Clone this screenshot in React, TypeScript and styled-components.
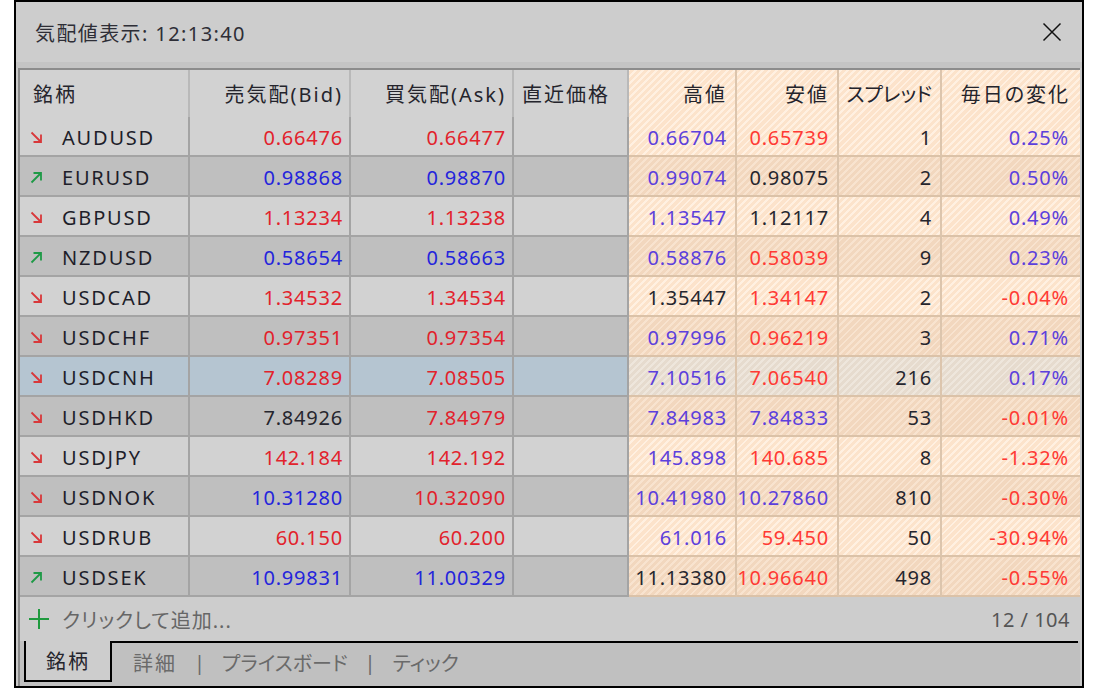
import React from 'react';
import styled, { createGlobalStyle } from 'styled-components';

const GlobalStyle = createGlobalStyle`
  html, body { margin: 0; padding: 0; background: #fff; }
  body {
    font-family: "Noto Sans", "Noto Sans CJK JP", sans-serif;
    font-size: 20px;
    color: #222;
  }
  * { box-sizing: border-box; }
`;

type Tone = 'light' | 'dark' | 'sel' | 'head';
type Ink = 'r' | 'b' | 'v' | 'o' | 'k';

const COLS = '170px 161px 163px 115px 108px 102px 103px 138px';

const grayBg: Record<Tone, string> = {
  light: '#d2d2d2',
  head: '#d2d2d2',
  dark: '#bfbfbf',
  sel: '#b5c5d1',
};

const hatchBg: Record<Tone, [string, string]> = {
  light: ['#fce3cb', '#fff0e1'],
  head: ['#fce3cb', '#fff0e1'],
  dark: ['#f2d7be', '#f8e3cf'],
  sel: ['#e6dbce', '#eee6dc'],
};

const inkColor: Record<Ink, string> = {
  r: '#e2222c',
  b: '#2424dc',
  v: '#5c40dc',
  o: '#ff3a34',
  k: '#26262e',
};

const Window = styled.div`
  margin-left: 14px;
  width: 1070px;
  height: 688px;
  border: 2px solid #000;
  background: #c9c9c9;
  display: flex;
  flex-direction: column;
`;

const TitleBar = styled.div`
  flex: none;
  height: 66px;
  display: flex;
  align-items: center;
  justify-content: space-between;
  padding: 0 20px 0 19px;
  background: #cdcdcd;
  border-bottom: 6px solid #c4c4c4;
`;

const Title = styled.span`
  color: #2e2e36;
  letter-spacing: 1.4px;
`;

const CloseBtn = styled.button`
  border: none;
  background: transparent;
  padding: 0;
  width: 20px;
  height: 20px;
  display: flex;
`;

const Panel = styled.div`
  flex: 1;
  margin: 0 2px;
  border-left: 2px solid #8c8c8c;
  border-top: 2px solid #8c8c8c;
  display: flex;
  flex-direction: column;
  background: #cdcdcd;
`;

const GridRow = styled.div<{ $head?: boolean }>`
  display: grid;
  grid-template-columns: ${COLS};
  height: ${(p) => (p.$head ? 47 : 40)}px;
`;

const Cell = styled.div<{
  $tone: Tone;
  $hatch?: boolean;
  $left?: boolean;
  $pl?: number;
  $pr?: number;
  $last?: boolean;
  $ink?: Ink;
}>`
  display: flex;
  align-items: center;
  justify-content: ${(p) => (p.$left ? 'flex-start' : 'flex-end')};
  gap: 19px;
  padding: ${(p) => (p.$tone === 'head' ? '0' : '3px')} ${(p) => p.$pr ?? 6}px 0 ${(p) => p.$pl ?? 0}px;
  white-space: nowrap;
  overflow: hidden;
  letter-spacing: 0.8px;
  color: ${(p) => (p.$ink ? inkColor[p.$ink] : '#1e1e2a')};
  background: ${(p) =>
    p.$hatch
      ? `repeating-linear-gradient(135deg, ${hatchBg[p.$tone][0]} 0 3px, ${hatchBg[p.$tone][1]} 3px 5px)`
      : grayBg[p.$tone]};
  background-attachment: fixed;
  border-right: ${(p) =>
    p.$last
      ? 'none'
      : `2px solid ${p.$hatch ? '#dcc5ad' : p.$tone === 'head' ? '#b9b9b9' : '#a4a4a4'}`};
  border-bottom: ${(p) =>
    p.$tone === 'head' ? 'none' : `2px solid ${p.$hatch ? '#dbc2a8' : '#a4a4a4'}`};
`;

const Symbol = styled.span`
  letter-spacing: 1.8px;
`;

const HeadText = styled.span<{ $ls?: number }>`
  letter-spacing: ${(p) => p.$ls ?? 2}px;
  font-feature-settings: "palt";
  color: #24242c;
`;

const AddRow = styled.div`
  flex: none;
  height: 44px;
  display: flex;
  align-items: center;
  justify-content: space-between;
  padding: 0 10px 0 8px;
  background: #cdcdcd;
  color: #666;
`;

const AddLabel = styled.span`
  display: flex;
  align-items: center;
  gap: 12px;
  letter-spacing: 1px;
  font-feature-settings: "palt";
`;

const Count = styled.span`
  color: #555;
  letter-spacing: 0.5px;
`;

const TabBar = styled.div`
  flex: 1;
  display: flex;
  align-items: flex-start;
  background: #c0c0c0;
  padding-left: 4px;
`;

const ActiveTab = styled.div`
  width: 88px;
  height: 41px;
  border: 2px solid #000;
  border-top: none;
  background: #cdcdcd;
  display: flex;
  align-items: center;
  justify-content: center;
  letter-spacing: 2px;
  color: #24242c;
`;

const TabRest = styled.div`
  flex: 1;
  height: 41px;
  margin-right: 2px;
  border-top: 2px solid #000;
  display: flex;
  align-items: center;
  gap: 17px;
  padding-left: 21px;
  color: #6a6a6a;
  font-feature-settings: "palt";
`;

const TabLabel = styled.span<{ $ls?: number }>`
  letter-spacing: ${(p) => p.$ls ?? 0}px;
`;

const Arrow = ({ up }: { up: boolean }) => (
  <svg width="13" height="13" viewBox="0 0 13 13" fill="none">
    {up ? (
      <path d="M1.5 11.5 L11 2 M3.5 2 H11 V9.5" stroke="#1e9a46" strokeWidth="1.8" />
    ) : (
      <path d="M1.5 1.5 L11 11 M3.5 11 H11 V3.5" stroke="#d8383a" strokeWidth="1.8" />
    )}
  </svg>
);

type Val = [string, Ink];
interface Quote {
  sym: string;
  up: boolean;
  bid: Val;
  ask: Val;
  high: Val;
  low: Val;
  spread: string;
  chg: Val;
}

const rows: Quote[] = [
  { sym: 'AUDUSD', up: false, bid: ['0.66476', 'r'], ask: ['0.66477', 'r'], high: ['0.66704', 'v'], low: ['0.65739', 'o'], spread: '1', chg: ['0.25%', 'v'] },
  { sym: 'EURUSD', up: true, bid: ['0.98868', 'b'], ask: ['0.98870', 'b'], high: ['0.99074', 'v'], low: ['0.98075', 'k'], spread: '2', chg: ['0.50%', 'v'] },
  { sym: 'GBPUSD', up: false, bid: ['1.13234', 'r'], ask: ['1.13238', 'r'], high: ['1.13547', 'v'], low: ['1.12117', 'k'], spread: '4', chg: ['0.49%', 'v'] },
  { sym: 'NZDUSD', up: true, bid: ['0.58654', 'b'], ask: ['0.58663', 'b'], high: ['0.58876', 'v'], low: ['0.58039', 'o'], spread: '9', chg: ['0.23%', 'v'] },
  { sym: 'USDCAD', up: false, bid: ['1.34532', 'r'], ask: ['1.34534', 'r'], high: ['1.35447', 'k'], low: ['1.34147', 'o'], spread: '2', chg: ['-0.04%', 'o'] },
  { sym: 'USDCHF', up: false, bid: ['0.97351', 'r'], ask: ['0.97354', 'r'], high: ['0.97996', 'v'], low: ['0.96219', 'o'], spread: '3', chg: ['0.71%', 'v'] },
  { sym: 'USDCNH', up: false, bid: ['7.08289', 'r'], ask: ['7.08505', 'r'], high: ['7.10516', 'v'], low: ['7.06540', 'o'], spread: '216', chg: ['0.17%', 'v'] },
  { sym: 'USDHKD', up: false, bid: ['7.84926', 'k'], ask: ['7.84979', 'r'], high: ['7.84983', 'v'], low: ['7.84833', 'v'], spread: '53', chg: ['-0.01%', 'o'] },
  { sym: 'USDJPY', up: false, bid: ['142.184', 'r'], ask: ['142.192', 'r'], high: ['145.898', 'v'], low: ['140.685', 'o'], spread: '8', chg: ['-1.32%', 'o'] },
  { sym: 'USDNOK', up: false, bid: ['10.31280', 'b'], ask: ['10.32090', 'r'], high: ['10.41980', 'v'], low: ['10.27860', 'v'], spread: '810', chg: ['-0.30%', 'o'] },
  { sym: 'USDRUB', up: false, bid: ['60.150', 'r'], ask: ['60.200', 'r'], high: ['61.016', 'v'], low: ['59.450', 'o'], spread: '50', chg: ['-30.94%', 'o'] },
  { sym: 'USDSEK', up: true, bid: ['10.99831', 'b'], ask: ['11.00329', 'b'], high: ['11.13380', 'k'], low: ['10.96640', 'o'], spread: '498', chg: ['-0.55%', 'o'] },
];

export default function App() {
  return (
    <>
      <GlobalStyle />
      <Window>
        <TitleBar>
          <Title>気配値表示: 12:13:40</Title>
          <CloseBtn aria-label="close">
            <svg width="20" height="20" viewBox="0 0 20 20">
              <path d="M1.5 1.5 L18.5 18.5 M18.5 1.5 L1.5 18.5" stroke="#111" strokeWidth="1.5" />
            </svg>
          </CloseBtn>
        </TitleBar>
        <Panel>
          <GridRow $head>
            <Cell $tone="head" $left $pl={13}><HeadText>銘柄</HeadText></Cell>
            <Cell $tone="head" $pr={6}><HeadText>売気配(Bid)</HeadText></Cell>
            <Cell $tone="head" $pr={6}><HeadText>買気配(Ask)</HeadText></Cell>
            <Cell $tone="head" $left $pl={8}><HeadText>直近価格</HeadText></Cell>
            <Cell $tone="head" $hatch $pr={8}><HeadText>高値</HeadText></Cell>
            <Cell $tone="head" $hatch $pr={8}><HeadText>安値</HeadText></Cell>
            <Cell $tone="head" $hatch $pr={8}><HeadText $ls={0}>スプレッド</HeadText></Cell>
            <Cell $tone="head" $hatch $pr={10} $last><HeadText>毎日の変化</HeadText></Cell>
          </GridRow>
          {rows.map((r, i) => {
            const tone: Tone = i === 6 ? 'sel' : i % 2 === 0 ? 'light' : 'dark';
            return (
              <GridRow key={r.sym}>
                <Cell $tone={tone} $left $pl={10}>
                  <Arrow up={r.up} />
                  <Symbol>{r.sym}</Symbol>
                </Cell>
                <Cell $tone={tone} $ink={r.bid[1]} $pr={6}>{r.bid[0]}</Cell>
                <Cell $tone={tone} $ink={r.ask[1]} $pr={6}>{r.ask[0]}</Cell>
                <Cell $tone={tone} />
                <Cell $tone={tone} $hatch $ink={r.high[1]} $pr={8}>{r.high[0]}</Cell>
                <Cell $tone={tone} $hatch $ink={r.low[1]} $pr={8}>{r.low[0]}</Cell>
                <Cell $tone={tone} $hatch $ink="k" $pr={8}>{r.spread}</Cell>
                <Cell $tone={tone} $hatch $ink={r.chg[1]} $pr={11} $last>{r.chg[0]}</Cell>
              </GridRow>
            );
          })}
          <AddRow>
            <AddLabel>
              <svg width="22" height="22" viewBox="0 0 22 22">
                <path d="M11 1 V21 M1 11 H21" stroke="#1f9a3e" strokeWidth="2" />
              </svg>
              クリックして追加...
            </AddLabel>
            <Count>12 / 104</Count>
          </AddRow>
          <TabBar>
            <ActiveTab>銘柄</ActiveTab>
            <TabRest>
              <TabLabel $ls={2}>詳細</TabLabel>
              <TabLabel>|</TabLabel>
              <TabLabel>プライスボード</TabLabel>
              <TabLabel>|</TabLabel>
              <TabLabel>ティック</TabLabel>
            </TabRest>
          </TabBar>
        </Panel>
      </Window>
    </>
  );
}
